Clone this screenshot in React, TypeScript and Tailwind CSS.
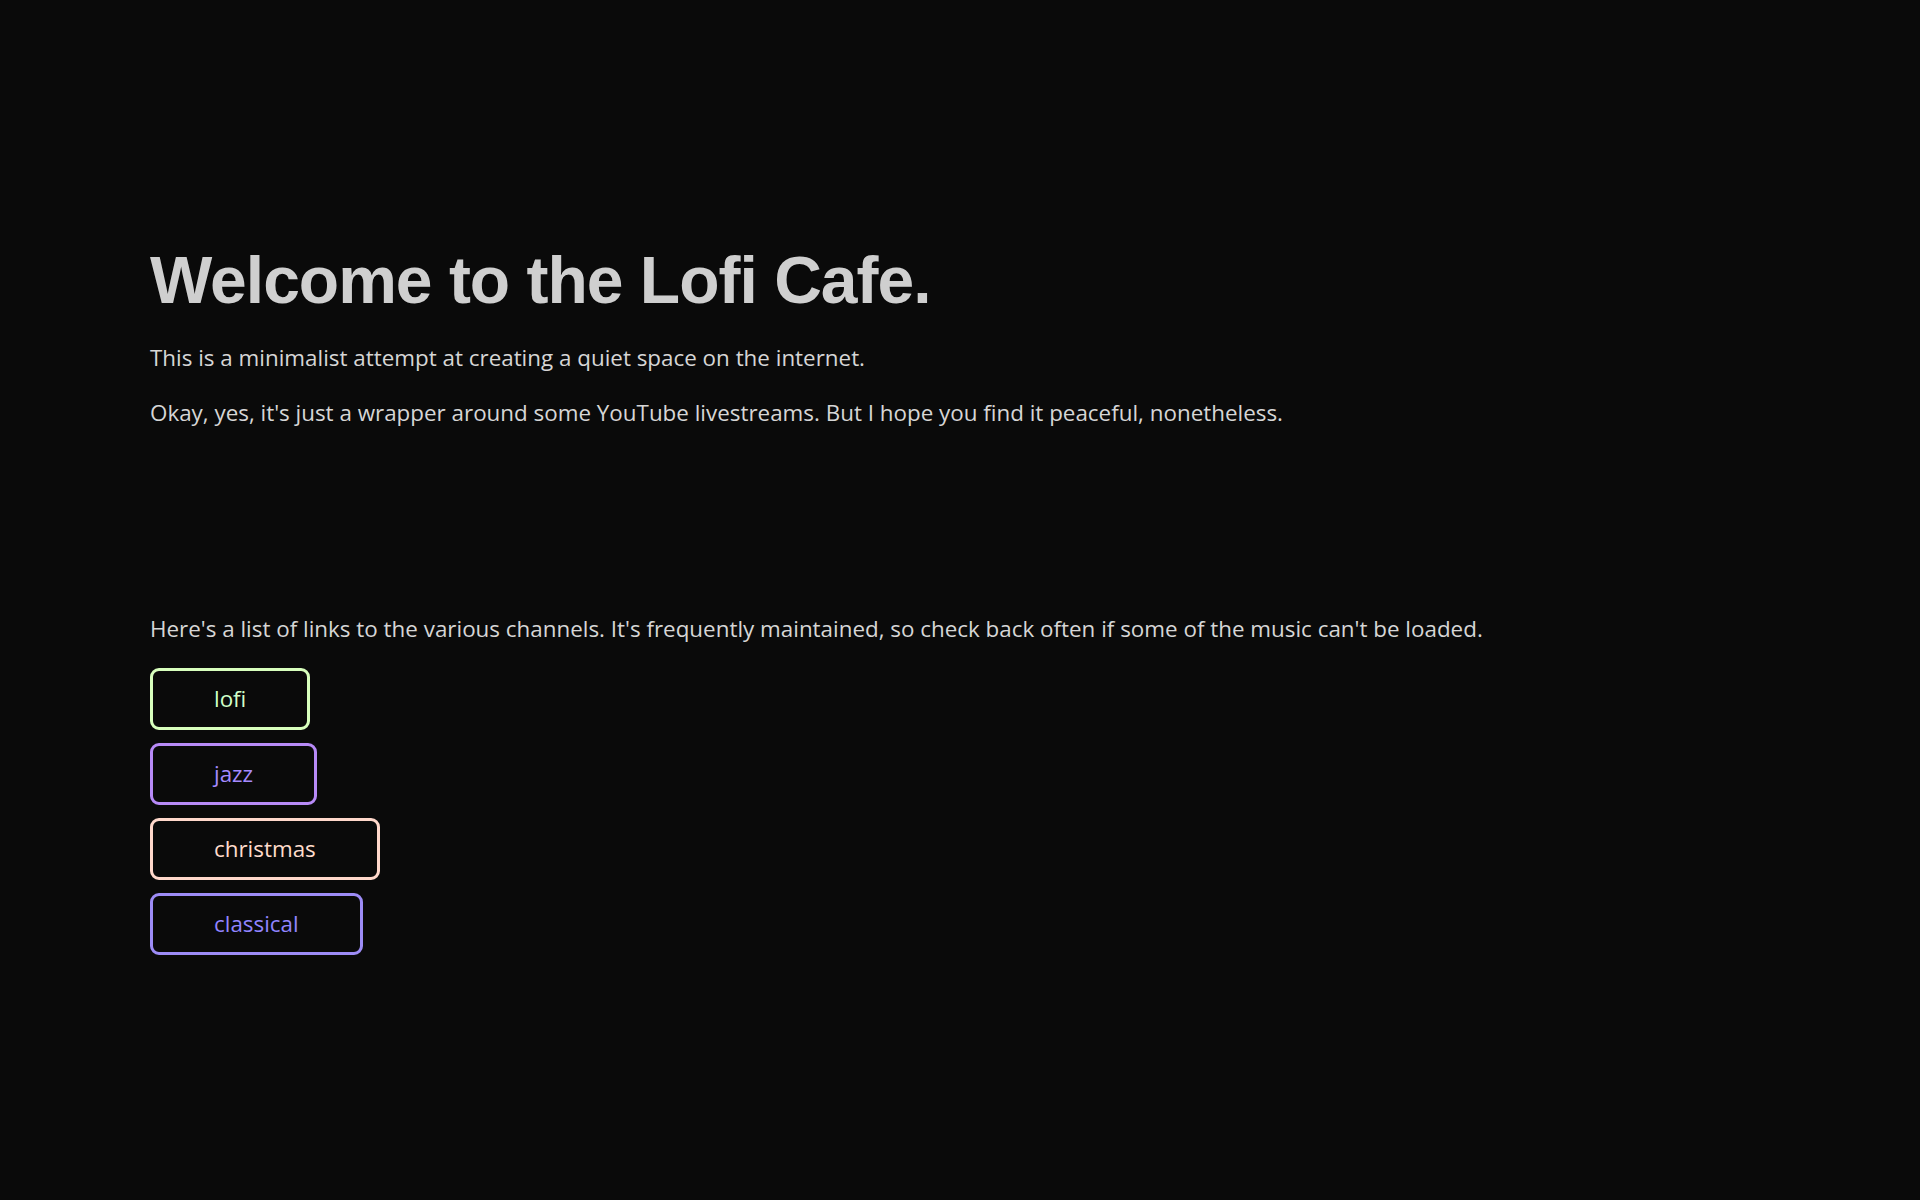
import React from 'react';

const channels = [
  { name: 'lofi', cls: 'border-[#d8ffbd] text-[#d0ffc8]' },
  { name: 'jazz', cls: 'border-[#b78af7] text-[#a58aff]' },
  { name: 'christmas', cls: 'border-[#ffd8cb] text-[#ffdccc]' },
  { name: 'classical', cls: 'border-[#9d8cf6] text-[#9184ff]' },
];

export default function App() {
  return (
    <div className="min-h-screen bg-[#0a0a0a] text-[#d6d6d6] font-['Open_Sans',sans-serif] text-[22.4px] leading-[30px]">
      <div className="pl-[150px] pt-[242px]">
        <h1 className="font-['Liberation_Sans',Arial,sans-serif] font-bold text-[66px] leading-[76px] tracking-[-1px] text-[#cfcfcf]">
          Welcome to the Lofi Cafe.
        </h1>
        <p className="mt-[25px]">This is a minimalist attempt at creating a quiet space on the internet.</p>
        <p className="mt-[25px]">
          Okay, yes, it's just a wrapper around some YouTube livestreams. But I hope you find it peaceful, nonetheless.
        </p>

        <p className="mt-[186px]">
          Here's a list of links to the various channels. It's frequently maintained, so check back often if some of the music can't be loaded.
        </p>
        <div className="mt-[24px] flex flex-col items-start gap-[13px]">
          {channels.map(c => (
            <a
              key={c.name}
              href="#"
              className={`block rounded-[9px] border-[3px] px-[61px] py-[13px] ${c.cls}`}
            >
              {c.name}
            </a>
          ))}
        </div>
      </div>
    </div>
  );
}
